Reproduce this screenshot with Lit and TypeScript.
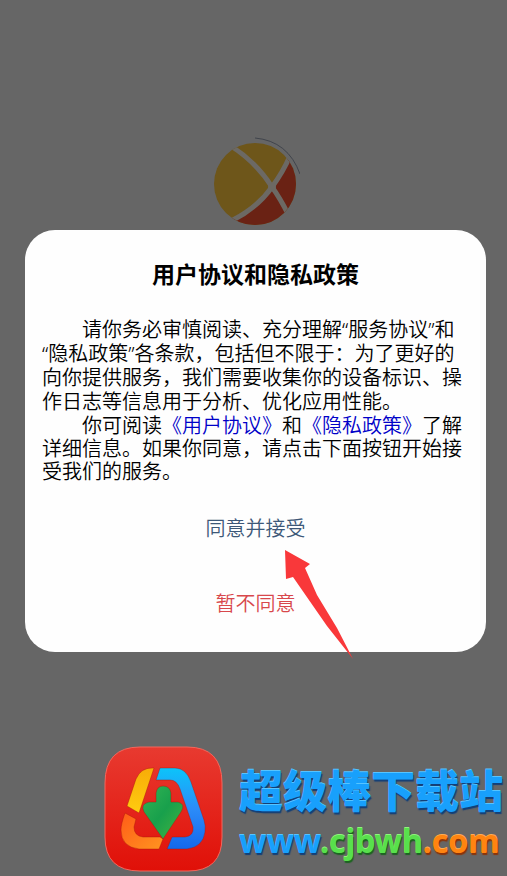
import { LitElement, html, css } from "lit";
import { customElement } from "lit/decorators.js";

@customElement("app-logo")
class AppLogo extends LitElement {
  static styles = css`
    :host { display: block; }
    svg { display: block; width: 92px; height: 92px; }
  `;
  render() {
    return html`<svg viewBox="0 0 92 92" role="img" aria-label="Logo">
      <defs><clipPath id="disc"><circle cx="47" cy="48" r="41" /></clipPath></defs>
      <g clip-path="url(#disc)">
        <rect width="92" height="92" fill="#6e561a" />
        <path d="M26 82Q50 71 64 52Q73 38 81 20L92 20V92H0Z" fill="#6a2214" />
        <path d="M23 10Q48 26 64 51Q72 62 80 78" fill="none" stroke="#6c6964" stroke-width="5" />
        <path d="M25 84Q50 71 64 51Q75 36 82 20" fill="none" stroke="#6c6964" stroke-width="5" />
      </g>
      <circle cx="64" cy="51" r="4" fill="#6c6964" />
      <path d="M47 2Q80 5 92 38" fill="none" stroke="#40444c" stroke-width="1" />
    </svg>`;
  }
}

@customElement("consent-dialog")
class ConsentDialog extends LitElement {
  static styles = css`
    :host {
      display: block;
      position: relative;
      background: #fefefe;
      border-radius: 30px;
      padding: 31px 17px 35px;
      color: #000;
      font-family: "Noto Sans", "Noto Sans CJK SC", sans-serif;
    }
    h1 { margin: 0 0 31px; font-size: 23px; line-height: 26px; font-weight: 700; text-align: center; }
    p { margin: 0; font-size: 20px; line-height: 24px; font-weight: 350; text-indent: 2em; }
    p.more { line-height: 23px; }
    a { color: #0000c8; text-decoration: none; }
    .actions { display: flex; flex-direction: column; align-items: center; gap: 49px; margin-top: 33px; }
    button {
      border: 0; padding: 0; background: none; cursor: pointer;
      font-family: inherit; font-size: 20px; line-height: 26px; font-weight: 350;
    }
    .accept { color: #3d5878; }
    .decline { color: #d8484c; }
    .arrow { position: absolute; left: 259px; top: 319px; width: 70px; height: 112px; pointer-events: none; }
  `;
  render() {
    return html`
      <h1>用户协议和隐私政策</h1>
      <p>请你务必审慎阅读、充分理解“服务协议”和<wbr>“隐私政策”各条款，包括但不限于：为了更好的向你提供服务，我们需要收集你的设备标识、操作日志等信息用于分析、优化应用性能。</p>
      <p class="more">你可阅读<a href="#terms">《用户协议》</a>和<a href="#privacy">《隐私政策》</a>了解详细信息。如果你同意，请点击下面按钮开始接受我们的服务。</p>
      <div class="actions">
        <button class="accept">同意并接受</button>
        <button class="decline">暂不同意</button>
      </div>
      <svg class="arrow" viewBox="0 0 70 112" aria-hidden="true">
        <path d="M1 1L26 15L21 19L33 46L53 79L69 110L43 77L9 28L2 30Z" fill="#f9383a" />
      </svg>
    `;
  }
}

@customElement("site-brand")
class SiteBrand extends LitElement {
  static styles = css`
    :host { display: flex; align-items: center; gap: 16px; }
    svg { display: block; flex: none; width: 120px; height: 128px; }
    .name { font: 900 44px/64px "Noto Sans CJK SC", sans-serif; color: #18a0fc; white-space: nowrap; text-shadow: 0 -1px 0 #56c4ff, 1px 2px 1px #123f78; }
    a { display: block; font: 700 32px/40px "Noto Sans", sans-serif; color: #18a0fc; text-decoration: none; white-space: nowrap; text-shadow: 0 -1px 0 #56c4ff, 1px 2px 1px #123f78; }
    .host { color: #58e04c; text-shadow: 0 -1px 0 #90f47c, 1px 2px 1px #1c6420; }
    .tld { color: #ff8410; text-shadow: 0 -1px 0 #ffac50, 1px 2px 1px #8c3408; }
  `;
  render() {
    return html`
      <svg viewBox="0 0 120 128" role="img" aria-label="超级棒下载站">
        <defs>
          <linearGradient id="red" x2="0" y2="1"><stop stop-color="#e83a30" /><stop offset="1" stop-color="#e01008" /></linearGradient>
          <linearGradient id="blue" x2="0" y2="1"><stop stop-color="#0cc4fa" /><stop offset=".5" stop-color="#2c8cf8" /><stop offset="1" stop-color="#1468ec" /></linearGradient>
          <linearGradient id="gold" x2="0" y2="1"><stop stop-color="#f8ac08" /><stop offset="1" stop-color="#ffcc10" /></linearGradient>
          <linearGradient id="orange" x2="1" y2="1"><stop stop-color="#ff5c18" /><stop offset="1" stop-color="#ff9420" /></linearGradient>
          <linearGradient id="green" x2="1" y2="1"><stop stop-color="#34b454" /><stop offset=".5" stop-color="#18a04c" /><stop offset="1" stop-color="#44b440" /></linearGradient>
        </defs>
        <path d="M37 2H84Q119 2 119 38V92Q119 126 85 126H37Q2 126 2 92V38Q2 2 37 2Z" fill="url(#red)" stroke="#f4665c" />
        <g stroke="#a81408" stroke-opacity=".4">
          <path d="M51 23L36 68L24 61L33 34Q38 22 51 23Z" fill="url(#gold)" />
          <path d="M22 68L33 74L31 82Q31 91 40 92H57L60 94L56 104H36Q18 102 18 85Q18 79 22 68Z" fill="url(#orange)" />
          <path d="M57 23H72Q83 23 88 37L101 75Q103 81 102 87Q100 102 84 104H64L69 92H82Q91 91 90 82L77 44Q74 35 67 35H53Z" fill="url(#blue)" />
          <path d="M53 57V48Q54 41 60 41Q67 41 68 48V57H75Q83 59 78 67L60 94L41 67Q37 59 46 57Z" fill="url(#green)" />
        </g>
      </svg>
      <div>
        <div class="name">超级棒下载站</div>
        <a href="#site">www<span class="host">.cjbwh</span><span class="tld">.com</span></a>
      </div>
    `;
  }
}

@customElement("app-root")
class AppRoot extends LitElement {
  static styles = css`
    :host {
      display: flex; flex-direction: column; box-sizing: border-box;
      min-height: 100vh; padding: 136px 0 3px; background: #666; overflow: hidden;
    }
    app-logo { align-self: center; margin-bottom: 2px; }
    consent-dialog { margin: 0 21px 0 25px; }
    site-brand { margin: auto 0 0 103px; padding-top: 92px; }
  `;
  render() {
    return html`<app-logo></app-logo><consent-dialog></consent-dialog><site-brand></site-brand>`;
  }
}
